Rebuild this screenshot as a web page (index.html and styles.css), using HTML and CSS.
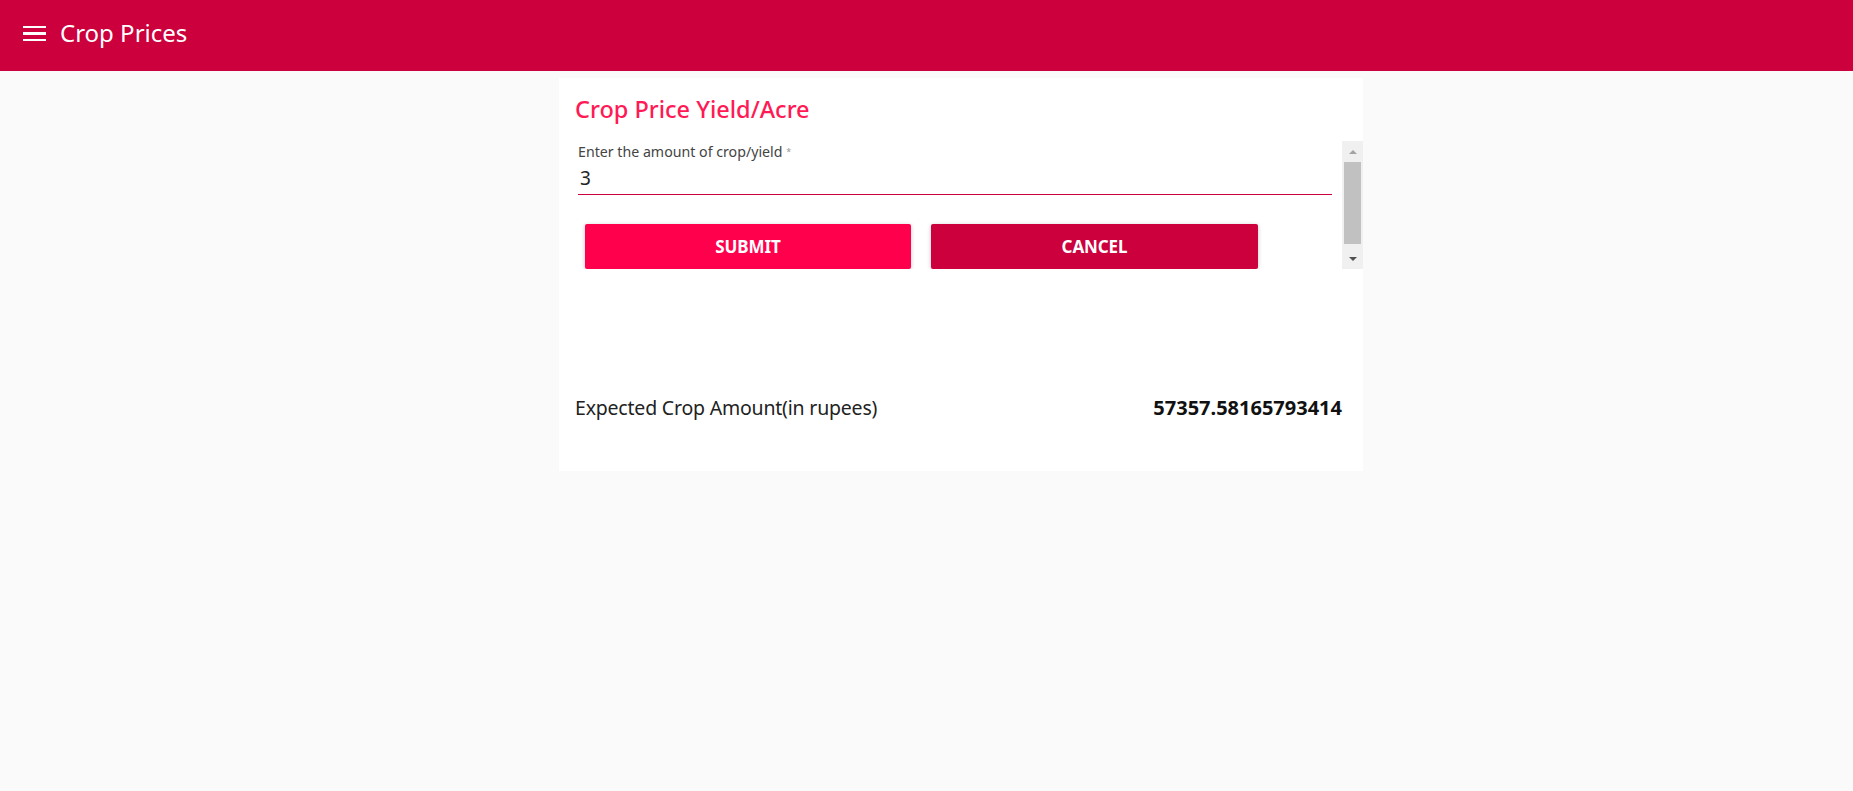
FILE: index.html
```html
<!DOCTYPE html>
<html>
<head>
<meta charset="utf-8">
<link rel="stylesheet" href="styles.css">
</head>
<body>
<header class="appbar">
  <div class="menu-icon"><span></span><span></span><span></span></div>
  <div class="app-title">Crop Prices</div>
</header>
<main class="page">
  <section class="card">
    <h2 class="card-title">Crop Price Yield/Acre</h2>
    <div class="scroll-area">
      <div class="scroll-content">
        <div class="field">
          <label class="field-label">Enter the amount of crop/yield <span class="req">*</span></label>
          <div class="field-input">3</div>
        </div>
        <div class="buttons">
          <button class="btn btn-submit">SUBMIT</button>
          <button class="btn btn-cancel">CANCEL</button>
        </div>
      </div>
      <div class="scrollbar">
        <div class="arrow arrow-up"></div>
        <div class="track"><div class="thumb"></div></div>
        <div class="arrow arrow-down"></div>
      </div>
    </div>
    <div class="result">
      <span class="result-label">Expected Crop Amount(in rupees)</span>
      <span class="result-value">57357.58165793414</span>
    </div>
  </section>
</main>
</body>
</html>
```
FILE: styles.css
```css
html, body {
  margin: 0;
  padding: 0;
}
body {
  background: #fafafa;
  font-family: "Noto Sans", "Open Sans", sans-serif;
  color: #222;
  height: 791px;
  overflow: hidden;
}
.appbar {
  height: 71px;
  background: #cc003d;
  display: flex;
  align-items: center;
  padding: 0 0 6px 23px;
  box-sizing: border-box;
}
.menu-icon {
  width: 23px;
  display: flex;
  flex-direction: column;
  gap: 4.5px;
  margin-top: 2px;
}
.menu-icon span {
  display: block;
  height: 2.2px;
  background: #fff;
}
.app-title {
  color: #fff;
  font-size: 24px;
  margin-left: 14px;
  letter-spacing: 0;
}
.page {
  display: grid;
  grid-template-columns: 559px 804px 1fr;
  padding-top: 7px;
}
.card {
  grid-column: 2;
  background: #fff;
  height: 393px;
  box-sizing: border-box;
  display: flex;
  flex-direction: column;
}
.card-title {
  margin: 0;
  padding: 16px 0 0 16px;
  height: 63px;
  box-sizing: border-box;
  font-size: 23.5px;
  line-height: 30px;
  font-weight: 500;
  color: #ff1a55;
  letter-spacing: 0;
}
.scroll-area {
  display: flex;
  height: 128px;
}
.scroll-content {
  flex: 1;
  padding: 0 10px 0 19px;
  overflow: hidden;
}
.field {
  padding-top: 2px;
}
.field-label {
  display: block;
  font-size: 14.2px;
  color: #444;
  letter-spacing: 0;
  line-height: 18px;
}
.req {
  font-size: 9px;
  color: #999;
  vertical-align: top;
}
.field-input {
  font-size: 19px;
  line-height: 26px;
  color: #222;
  padding: 4px 0 0 2px;
  border-bottom: 1.5px solid #cc003d;
  box-sizing: border-box;
  height: 34px;
}
.buttons {
  display: flex;
  gap: 20px;
  padding: 29px 0 0 7px;
}
.btn {
  width: 326px;
  height: 45px;
  border: none;
  border-radius: 2px;
  color: #fff;
  font-family: "Noto Sans", "Open Sans", sans-serif;
  font-weight: 700;
  font-size: 17px;
  letter-spacing: -0.1px;
  box-shadow: 0 1px 4px rgba(0,0,0,0.22);
}
.btn-submit {
  background: #ff004d;
}
.btn-cancel {
  background: #cc003d;
  width: 327px;
}
.scrollbar {
  width: 21px;
  background: #f0f0f0;
  display: flex;
  flex-direction: column;
}
.arrow {
  height: 21px;
  display: flex;
  align-items: center;
  justify-content: center;
}
.arrow-up::before {
  content: "";
  border-left: 4px solid transparent;
  border-right: 4px solid transparent;
  border-bottom: 4px solid #a3a3a3;
}
.arrow-down::before {
  content: "";
  border-left: 4px solid transparent;
  border-right: 4px solid transparent;
  border-top: 4px solid #505050;
}
.track {
  flex: 1;
  padding: 0 2px;
}
.thumb {
  height: 82px;
  background: #c1c1c1;
}
.result {
  display: flex;
  justify-content: space-between;
  align-items: center;
  padding: 0 21px 0 16px;
  margin-top: 126px;
  line-height: 26px;
}
.result-label {
  font-size: 19.5px;
  color: #222;
  letter-spacing: -0.2px;
}
.result-value {
  font-size: 20px;
  font-weight: 700;
  color: #111;
  letter-spacing: 0;
}
```
